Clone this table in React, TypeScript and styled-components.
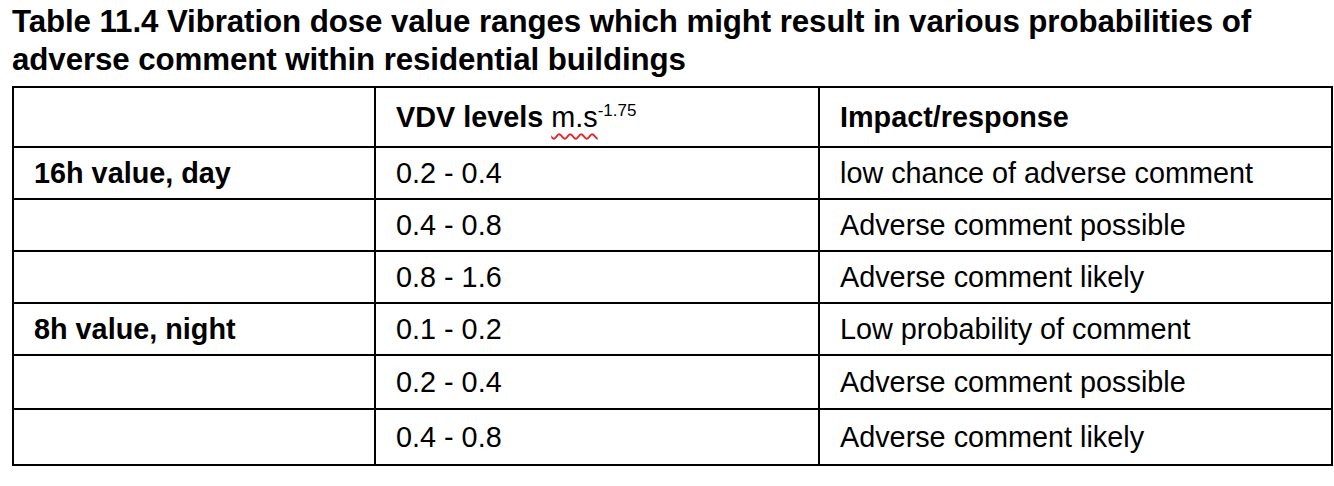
import React from 'react';
import styled, { createGlobalStyle } from 'styled-components';

const GlobalStyle = createGlobalStyle`
  html, body {
    margin: 0;
    padding: 0;
    background: #ffffff;
  }
  body {
    font-family: "Liberation Sans", Arial, sans-serif;
    color: #000000;
  }
`;

const Page = styled.div`
  padding: 3px 0 0 12px;
  width: 1320px;
`;

const Title = styled.h1`
  margin: 0 0 7px 0;
  font-family: "Liberation Sans", Arial, sans-serif;
  font-weight: 700;
  font-size: 31.3px;
  line-height: 38px;
  letter-spacing: -0.1px;
  color: #000000;
`;

const Table = styled.table`
  border-collapse: collapse;
  table-layout: fixed;
  width: 1319px;
  font-size: 28.8px;
`;

const Cell = styled.td<{ $bold?: boolean; $height: number }>`
  border: 2px solid #000000;
  height: ${(p) => p.$height}px;
  padding: 0 0 0 20px;
  box-sizing: border-box;
  vertical-align: middle;
  font-weight: ${(p) => (p.$bold ? 700 : 400)};
  white-space: nowrap;
  line-height: 32px;
`;

const Unit = styled.span`
  font-weight: 400;
  text-decoration-line: underline;
  text-decoration-style: wavy;
  text-decoration-color: #e3262b;
  text-decoration-thickness: 2px;
  text-underline-offset: 6px;
`;

const Sup = styled.sup`
  font-weight: 400;
  font-size: 17px;
  vertical-align: 11px;
  line-height: 0;
`;

type Row = { label?: string; range: string; impact: string; height: number };

const rows: Row[] = [
  { label: '16h value, day', range: '0.2 - 0.4', impact: 'low chance of adverse comment', height: 52 },
  { range: '0.4 - 0.8', impact: 'Adverse comment possible', height: 52 },
  { range: '0.8 - 1.6', impact: 'Adverse comment likely', height: 52 },
  { label: '8h value, night', range: '0.1 - 0.2', impact: 'Low probability of comment', height: 52 },
  { range: '0.2 - 0.4', impact: 'Adverse comment possible', height: 54 },
  { range: '0.4 - 0.8', impact: 'Adverse comment likely', height: 56 },
];

const App = () => {
  return (
    <>
      <GlobalStyle />
      <Page>
        <Title>
          Table 11.4 Vibration dose value ranges which might result in various probabilities of
          <br />
          adverse comment within residential buildings
        </Title>
        <Table>
          <colgroup>
            <col style={{ width: 362 }} />
            <col style={{ width: 444 }} />
            <col style={{ width: 513 }} />
          </colgroup>
          <tbody>
            <tr>
              <Cell $height={60} />
              <Cell $bold $height={60}>
                VDV levels <Unit>m.s</Unit>
                <Sup>-1.75</Sup>
              </Cell>
              <Cell $bold $height={60}>
                Impact/response
              </Cell>
            </tr>
            {rows.map((r, i) => (
              <tr key={i}>
                <Cell $bold $height={r.height}>
                  {r.label}
                </Cell>
                <Cell $height={r.height}>{r.range}</Cell>
                <Cell $height={r.height}>{r.impact}</Cell>
              </tr>
            ))}
          </tbody>
        </Table>
      </Page>
    </>
  );
};

export default App;
